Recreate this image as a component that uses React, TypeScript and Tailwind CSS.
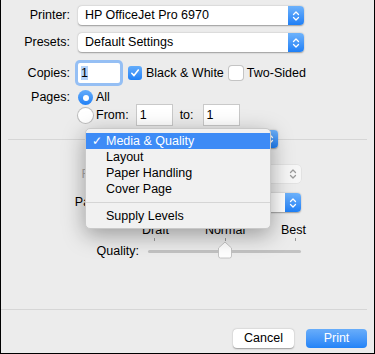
import { FC, ReactNode } from "react";

const Stepper: FC<{ blue?: boolean }> = ({ blue = true }) => (
    <div
        className={
            blue
                ? "w-[16px] h-full rounded-r-[4px] bg-gradient-to-b from-[#6db2fb] to-[#1c7ff6] flex items-center justify-center"
                : "w-[16px] h-full rounded-r-[4px] flex items-center justify-center"
        }
    >
        <svg width="8" height="12" viewBox="0 0 8 12" fill="none">
            <path d="M1.5 4.5 L4 2 L6.5 4.5" stroke={blue ? "#fff" : "#9a9a9a"} strokeWidth="1.3" strokeLinecap="round" strokeLinejoin="round" />
            <path d="M1.5 7.5 L4 10 L6.5 7.5" stroke={blue ? "#fff" : "#9a9a9a"} strokeWidth="1.3" strokeLinecap="round" strokeLinejoin="round" />
        </svg>
    </div>
);

const Popup: FC<{ value?: string; w: string; h?: string; disabled?: boolean }> = ({ value = "", w, h = "h-[19px]", disabled }) => (
    <div
        className={`${w} ${h} flex rounded-[4px] ${
            disabled ? "bg-[#f6f6f6] shadow-[0_0_0_0.5px_rgba(0,0,0,0.08)]" : "bg-white shadow-[0_0.5px_1.5px_rgba(0,0,0,0.35)]"
        }`}
    >
        <div className={`flex-1 pl-[7px] leading-[19px] ${disabled ? "text-[#b0b0b0]" : "text-black"}`}>{value}</div>
        <Stepper blue={!disabled} />
    </div>
);

const Label: FC<{ children: ReactNode; w?: string; muted?: boolean }> = ({ children, w = "w-[69px]", muted }) => (
    <div className={`${w} text-right shrink-0 ${muted ? "text-[#a8a8a8]" : "text-black"}`}>{children}</div>
);

const TextBox: FC<{ value: string; w: string; focus?: boolean }> = ({ value, w, focus }) => (
    <div
        className={`${w} h-[20px] bg-white pl-[3px] leading-[20px] ${
            focus ? "shadow-[0_0_0_3px_#95bff4] rounded-[2px]" : "shadow-[0_0_0_1px_#c9c9c9]"
        }`}
    >
        {focus ? <span className="bg-[#b4d3fa]">{value}</span> : value}
    </div>
);

const Check: FC<{ on?: boolean }> = ({ on }) =>
    on ? (
        <div className="w-[14px] h-[14px] rounded-[3px] bg-gradient-to-b from-[#63acfa] to-[#1e80f6] flex items-center justify-center">
            <svg width="10" height="10" viewBox="0 0 10 10" fill="none">
                <path d="M1.8 5.3 L4 7.6 L8.3 2" stroke="#fff" strokeWidth="1.6" strokeLinecap="round" strokeLinejoin="round" />
            </svg>
        </div>
    ) : (
        <div className="w-[14px] h-[14px] rounded-[3px] bg-white shadow-[0_0_0_1px_#c4c4c4]" />
    );

const Radio: FC<{ on?: boolean }> = ({ on }) =>
    on ? (
        <div className="w-[15px] h-[15px] rounded-full bg-gradient-to-b from-[#63acfa] to-[#1e80f6] flex items-center justify-center">
            <div className="w-[6px] h-[6px] rounded-full bg-white" />
        </div>
    ) : (
        <div className="w-[15px] h-[15px] rounded-full bg-white shadow-[0_0_0_1px_#bdbdbd]" />
    );

export default function App() {
    const menu = ["Media & Quality", "Layout", "Paper Handling", "Cover Page"];

    return (
        <div
            className="relative w-[375px] h-[354px] bg-[#ececec] border-l border-r border-b border-black flex flex-col text-[12.5px] text-black overflow-hidden"
            style={{ fontFamily: '"Liberation Sans", Arial, sans-serif' }}
        >
            {/* printer / presets */}
            <div className="mt-[6px] h-[19px] flex items-center">
                <Label>Printer:</Label>
                <div className="ml-[8px]">
                    <Popup value="HP OfficeJet Pro 6970" w="w-[226px]" />
                </div>
            </div>
            <div className="mt-[8px] h-[19px] flex items-center">
                <Label>Presets:</Label>
                <div className="ml-[8px]">
                    <Popup value="Default Settings" w="w-[226px]" />
                </div>
            </div>

            <div className="mt-[10px] h-[22px] flex items-center">
                <Label>Copies:</Label>
                <div className="ml-[8px]">
                    <TextBox value="1" w="w-[42px]" focus />
                </div>
                <div className="ml-[8px]">
                    <Check on />
                </div>
                <span className="ml-[4px]">Black &amp; White</span>
                <div className="ml-[5px]">
                    <Check />
                </div>
                <span className="ml-[4px]">Two-Sided</span>
            </div>

            <div className="mt-[6px] h-[15px] flex items-center">
                <Label>Pages:</Label>
                <div className="ml-[8px]">
                    <Radio on />
                </div>
                <span className="ml-[3px]">All</span>
            </div>
            <div className="h-[20px] flex items-center">
                <div className="w-[77px] shrink-0" />
                <Radio />
                <span className="ml-[3px]">From:</span>
                <div className="ml-[8px]">
                    <TextBox value="1" w="w-[35px]" />
                </div>
                <span className="ml-[8px]">to:</span>
                <div className="ml-[10px]">
                    <TextBox value="1" w="w-[35px]" />
                </div>
            </div>

            {/* panel popup on the divider */}
            <div className="mt-[5px] h-[18px] grid">
                <div className="[grid-area:1/1] self-center ml-[7px] mr-[7px] h-px bg-[#d6d6d6]" />
                <div className="[grid-area:1/1] ml-[97px]">
                    <Popup value="Media & Quality" w="w-[180px]" h="h-[18px]" />
                </div>
            </div>

            <div className="mt-[17px] h-[18px] flex items-center">
                <Label w="w-[141px]" muted>Feed from:</Label>
                <div className="ml-[6px]">
                    <Popup value="Auto Select" w="w-[153px]" h="h-[18px]" disabled />
                </div>
            </div>
            <div className="mt-[10px] h-[19px] flex items-center">
                <Label w="w-[141px]">Paper Type:</Label>
                <div className="ml-[6px]">
                    <Popup value="Plain Paper" w="w-[153px]" />
                </div>
            </div>

            {/* quality slider */}
            <div className="mt-[11px] h-[14px] flex">
                <div className="ml-[141px] w-[164px] flex justify-between leading-[14px]">
                    <span>Draft</span>
                    <span>Normal</span>
                    <span>Best</span>
                </div>
            </div>
            <div className="mt-[1px] h-[4px] flex">
                <div className="ml-[153px] w-[142px] flex justify-between">
                    <div className="w-px h-[3px] bg-[#9a9a9a]" />
                    <div className="w-px h-[3px] bg-[#9a9a9a]" />
                    <div className="w-px h-[3px] bg-[#9a9a9a]" />
                </div>
            </div>
            <div className="mt-[2px] h-[15px] flex items-center">
                <Label w="w-[138px]">Quality:</Label>
                <div className="relative ml-[9px] w-[153px] h-[15px] flex items-center">
                    <div className="w-full h-[3px] rounded-full bg-[#c2c2c2]" />
                    <svg className="absolute left-[69px] top-[-3px]" width="16" height="18" viewBox="0 0 16 18">
                        <path
                            d="M8 1 L14.5 7 L14.5 15 Q14.5 17 12.5 17 L3.5 17 Q1.5 17 1.5 15 L1.5 7 Z"
                            fill="#fff"
                            stroke="#b9b9b9"
                            strokeWidth="0.8"
                        />
                    </svg>
                </div>
            </div>

            <div className="flex-1" />
            <div className="h-px bg-[#d6d6d6] mr-[7px]" />
            <div className="mt-[19px] h-[19px] mb-[5px] flex justify-end pr-[7px] gap-[12px]">
                <div className="w-[61px] h-[19px] rounded-[4px] bg-white shadow-[0_0.5px_1.5px_rgba(0,0,0,0.35)] text-center leading-[19px]">
                    Cancel
                </div>
                <div className="w-[61px] h-[19px] rounded-[4px] bg-gradient-to-b from-[#68adfa] to-[#2183f7] text-white text-center leading-[19px]">
                    Print
                </div>
            </div>

            {/* open popup menu */}
            <div className="absolute left-[84px] top-[128px] w-[186px] py-[4px] rounded-[5px] bg-[#f1f1f1] border border-[#c9c9c9] shadow-[0_6px_22px_rgba(0,0,0,0.35)]">
                {menu.map((m, i) => (
                    <div
                        key={m}
                        className={`h-[16px] flex items-center leading-[16px] ${i === 0 ? "bg-[#3d8bf6] text-white" : "text-black"}`}
                    >
                        <span className="w-[20px] pl-[6px] text-[12px]">{i === 0 ? "✓" : ""}</span>
                        <span>{m}</span>
                    </div>
                ))}
                <div className="my-[5px] h-px bg-[#d5d5d5]" />
                <div className="h-[16px] flex items-center leading-[16px]">
                    <span className="w-[20px]" />
                    <span>Supply Levels</span>
                </div>
            </div>
        </div>
    );
}
